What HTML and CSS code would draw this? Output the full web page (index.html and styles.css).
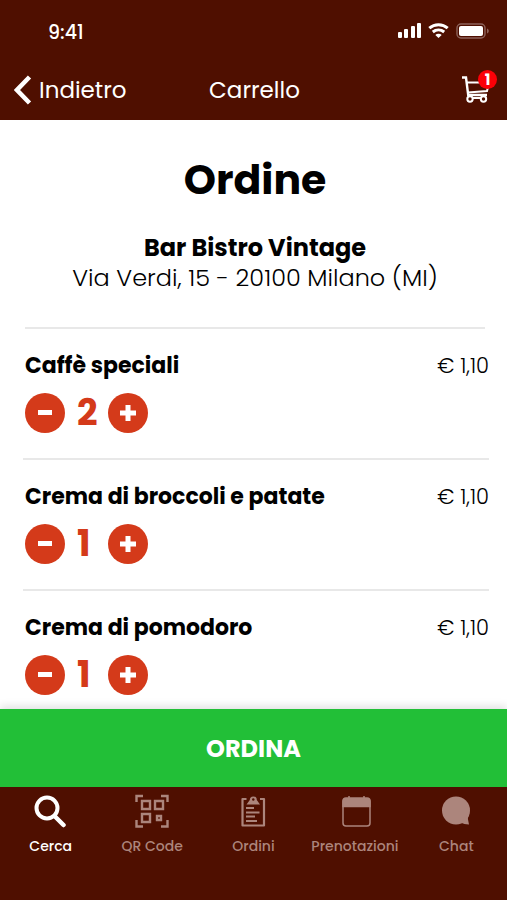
FILE: index.html
```html
<!DOCTYPE html>
<html lang="it">
<head>
  <meta charset="UTF-8" />
  <meta name="viewport" content="width=device-width, initial-scale=1.0"/>
  <title>Carrello</title>
  <link rel="stylesheet" href="styles.css">
</head>
<body>

  <header class="header">
    <div class="status-bar">
      <span class="time">9:41</span>
      <div class="status-icons">
        <svg width="24" height="16" viewBox="0 0 24 16" fill="#fff">
          <rect x="0" y="9" width="4" height="6" rx="1"/>
          <rect x="6" y="6" width="4" height="9" rx="1"/>
          <rect x="13" y="3" width="4" height="12" rx="1"/>
          <rect x="19" y="0" width="4" height="15" rx="1"/>
        </svg>
        <svg width="22" height="16" viewBox="0 0 22 16" fill="none" stroke="#fff" stroke-width="3">
          <path d="M1.300 5.200a14 14 0 0 1 18.400 0"/>
          <path d="M4.800 9a9 9 0 0 1 11.400 0"/>
          <path d="M10.500 15l-3.200-3a4.500 4.500 0 0 1 6.400 0z" fill="#fff" stroke="none"/>
        </svg>
        <svg width="34" height="16" viewBox="0 0 34 16">
          <rect x="1" y="1" width="28" height="14" rx="4" fill="none" stroke="#8d6259" stroke-width="1.400"/>
          <rect x="3" y="3" width="24" height="10" rx="2" fill="#fff"/>
          <path d="M31 5.500v5c2.400-1 2.400-4 0-5z" fill="#8d6259"/>
        </svg>
      </div>
    </div>
    <div class="nav-bar">
      <a class="back" href="#">
        <svg width="18" height="30" viewBox="0 0 18 30" fill="none" stroke="#fff" stroke-width="4.500">
          <path d="M15.500 2L3 15L15.500 28"/>
        </svg>
        Indietro
      </a>
      <span class="nav-title">Carrello</span>
      <a class="cart" href="#" aria-label="Carrello">
        <svg width="28" height="28" viewBox="0 0 28 28" fill="none" stroke="#fff" stroke-width="2">
          <path d="M0 1.500h4l2.200 17.500h18.800" stroke-width="2.400"/>
          <path d="M5 6.500h20.500M5.900 16.500L25 15l1.500-6"/>
          <circle cx="8" cy="23" r="2.700"/>
          <circle cx="21.500" cy="23" r="2.700"/>
          <path d="M10.500 22h8.500"/>
        </svg>
        <span class="badge">1</span>
      </a>
    </div>
  </header>

  <main class="content">
    <div class="shop">
      <h1>Ordine</h1>
      <h2>Bar Bistro Vintage</h2>
      <p>Via Verdi, 15 - 20100 Milano (MI)</p>
    </div>

    <section class="item">
      <div class="item-row">
        <h3>Caffè speciali</h3>
        <span class="price">€ 1,10</span>
      </div>
      <div class="counter">
        <button class="round" aria-label="Togli"><svg width="16" height="16" viewBox="0 0 16 16"><path d="M1 5h14v5H1z" fill="#fff"/></svg></button>
        <span class="qty">2</span>
        <button class="round" aria-label="Aggiungi"><svg width="16" height="16" viewBox="0 0 16 16"><path d="M0 5.500h5.500V0h5v5.500H16v5h-5.500V16h-5v-5.500H0z" fill="#fff"/></svg></button>
      </div>
    </section>

    <section class="item">
      <div class="item-row">
        <h3>Crema di broccoli e patate</h3>
        <span class="price">€ 1,10</span>
      </div>
      <div class="counter">
        <button class="round" aria-label="Togli"><svg width="16" height="16" viewBox="0 0 16 16"><path d="M1 5h14v5H1z" fill="#fff"/></svg></button>
        <span class="qty">1</span>
        <button class="round" aria-label="Aggiungi"><svg width="16" height="16" viewBox="0 0 16 16"><path d="M0 5.500h5.500V0h5v5.500H16v5h-5.500V16h-5v-5.500H0z" fill="#fff"/></svg></button>
      </div>
    </section>

    <section class="item">
      <div class="item-row">
        <h3>Crema di pomodoro</h3>
        <span class="price">€ 1,10</span>
      </div>
      <div class="counter">
        <button class="round" aria-label="Togli"><svg width="16" height="16" viewBox="0 0 16 16"><path d="M1 5h14v5H1z" fill="#fff"/></svg></button>
        <span class="qty">1</span>
        <button class="round" aria-label="Aggiungi"><svg width="16" height="16" viewBox="0 0 16 16"><path d="M0 5.500h5.500V0h5v5.500H16v5h-5.500V16h-5v-5.500H0z" fill="#fff"/></svg></button>
      </div>
    </section>
  </main>

  <footer class="footer">
    <button class="order-btn">ORDINA</button>
    <nav class="tabs">
      <a class="tab active" href="#">
        <svg width="34" height="34" viewBox="0 0 34 34" fill="none" stroke="currentColor" stroke-width="4">
          <circle cx="13" cy="14" r="10.500"/>
          <path d="M20.500 22l9 9" stroke-width="4.500" stroke-linecap="round"/>
        </svg>
        Cerca
      </a>
      <a class="tab" href="#">
        <svg width="34" height="34" viewBox="0 0 34 34" fill="none" stroke="currentColor" stroke-width="2.400">
          <path d="M1.500 8V2H8M26 2h6.500v6M32.500 26v6.500H26M8 32.500H1.500V26"/>
          <path d="M7 7h8v8H7zM20 7h8v8h-8zM7 20h8v8H7zM22 22h4v4h-4z"/>
        </svg>
        QR Code
      </a>
      <a class="tab" href="#">
        <svg width="34" height="34" viewBox="0 0 34 34" fill="none" stroke="currentColor" stroke-width="2.200">
          <path d="M10.500 5H6.500v26.500h21.500V5h-4" stroke-linejoin="round"/>
          <path d="M10.500 10.500l3.300-4.500a3.500 3.500 0 0 1 7 0l3.200 4.500z" fill="currentColor" stroke="none"/>
          <circle cx="17.300" cy="5.500" r="1.200" fill="#4f0f00" stroke="none"/>
          <path d="M10 14h8M10 18.500h13.500M10 22.500h9M10 27h11"/>
        </svg>
        Ordini
      </a>
      <a class="tab" href="#">
        <svg width="34" height="34" viewBox="0 0 34 34" fill="none" stroke="currentColor" stroke-width="1.500">
          <rect x="5" y="5" width="27" height="27" rx="3"/>
          <path d="M5 12.500V7a3 3 0 0 1 3-3h21a3 3 0 0 1 3 3v5.500z" fill="currentColor"/>
          <path d="M11 2v4M26 2v4"/>
        </svg>
        Prenotazioni
      </a>
      <a class="tab" href="#">
        <svg width="34" height="34" viewBox="0 0 34 34" fill="currentColor">
          <circle cx="17" cy="16.500" r="14"/>
          <path d="M30.500 19c-1.500 3-1.700 5-1.500 6.500l1 5c-3.500 0-6-.8-8.400-2z"/>
        </svg>
        Chat
      </a>
    </nav>
  </footer>

</body>
</html>
```
FILE: styles.css
```css
* {
  box-sizing: border-box;
}

body {
  margin: 0;
  min-height: 100vh;
  display: flex;
  flex-direction: column;
  font-family: Poppins, Inter, sans-serif;
  background: #fff;
  color: #000;
}

h1, h2, h3, p {
  margin: 0;
}

a {
  color: inherit;
  text-decoration: none;
}

button {
  border: none;
  padding: 0;
  font-family: inherit;
  cursor: pointer;
}

svg {
  display: block;
}

.header {
  background: #4f0f00;
  color: #fff;
}

.status-bar {
  display: flex;
  justify-content: space-between;
  align-items: center;
  height: 62px;
  padding: 0 17px 0 48px;
}

.time {
  padding-top: 4px;
  font-size: 19px;
  font-weight: 500;
  line-height: 24px;
}

.status-icons {
  display: flex;
  gap: 6px;
}

.nav-bar {
  display: grid;
  grid-template-columns: 1fr auto 1fr;
  align-items: center;
  height: 58px;
  padding: 0 12px 2px 14px;
  font-size: 23px;
  line-height: 32px;
}

.back {
  display: flex;
  align-items: center;
  gap: 7px;
}

.cart {
  position: relative;
  justify-self: end;
  padding-right: 5px;
}

.badge {
  position: absolute;
  top: -6px;
  right: -2px;
  width: 19px;
  height: 19px;
  border-radius: 50%;
  background: #fb0007;
  font-size: 15px;
  font-weight: 700;
  line-height: 19px;
  text-align: center;
}

.content {
  flex: 1;
}

.shop {
  margin: 0 22px 0 25px;
  padding: 34px 0;
  border-bottom: 2px solid #e8e8e8;
  text-align: center;
  font-size: 24px;
  font-weight: 300;
  line-height: 30px;
}

.shop h1 {
  padding-bottom: 27px;
  font-size: 41px;
  line-height: 52px;
}

.shop h2 {
  font-size: 24px;
}

.item {
  margin: 0 18px 0 23px;
  padding: 22px 0 25px 2px;
  border-bottom: 2px solid #e8e8e8;
}

.item:last-child {
  padding-bottom: 14px;
  border-bottom: none;
}

.item-row {
  display: flex;
  justify-content: space-between;
  line-height: 30px;
}

h3 {
  font-size: 22px;
}

.price {
  font-size: 21px;
  font-weight: 300;
}

.counter {
  display: flex;
  align-items: center;
  margin-top: 12px;
}

.round {
  display: flex;
  align-items: center;
  justify-content: center;
  width: 40px;
  height: 40px;
  border-radius: 50%;
  background: #d43a1a;
}

.qty {
  width: 43px;
  padding-left: 12px;
  color: #d43a1a;
  font-size: 36px;
  font-weight: 700;
  line-height: 40px;
}

.footer {
  position: sticky;
  bottom: 0;
  background: #4f0f00;
  box-shadow: 0 -3px 8px rgba(0,0,0,0.12);
}

.order-btn {
  display: block;
  width: 100%;
  height: 78px;
  background: #22bf37;
  color: #fff;
  font-size: 24px;
  font-weight: 700;
}

.tabs {
  display: grid;
  grid-template-columns: repeat(5, 1fr);
  height: 113px;
  padding-top: 7px;
}

.tab {
  display: flex;
  flex-direction: column;
  align-items: center;
  gap: 8px;
  color: #ac857c;
  font-size: 14px;
  font-weight: 500;
  line-height: 20px;
}

.tab.active {
  color: #fff;
}
```
